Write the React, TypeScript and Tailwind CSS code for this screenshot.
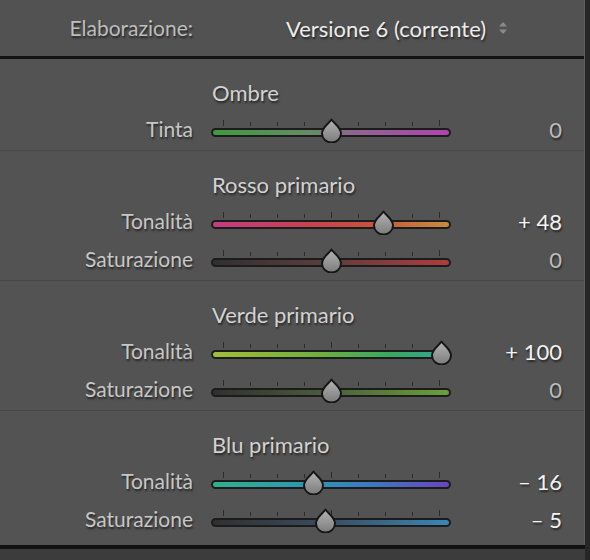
import React from 'react';

type Row = { label: string; value: number; gradient: string };
type Section = { title: string; rows: Row[] };

const sections: Section[] = [
  {
    title: 'Ombre',
    rows: [{ label: 'Tinta', value: 0, gradient: 'linear-gradient(90deg,#3e9a3e 0%,#6a8a6a 45%,#8a6a8a 55%,#b043b0 100%)' }],
  },
  {
    title: 'Rosso primario',
    rows: [
      { label: 'Tonalità', value: 48, gradient: 'linear-gradient(90deg,#c23c82 0%,#c64250 40%,#c8503e 65%,#c88c3e 100%)' },
      { label: 'Saturazione', value: 0, gradient: 'linear-gradient(90deg,#303030 0%,#5a3c3c 45%,#b03c3c 100%)' },
    ],
  },
  {
    title: 'Verde primario',
    rows: [
      { label: 'Tonalità', value: 100, gradient: 'linear-gradient(90deg,#a4bc3a 0%,#6eb040 45%,#3aa860 75%,#2fa898 100%)' },
      { label: 'Saturazione', value: 0, gradient: 'linear-gradient(90deg,#303030 0%,#4a5a3a 45%,#6aa03a 100%)' },
    ],
  },
  {
    title: 'Blu primario',
    rows: [
      { label: 'Tonalità', value: -16, gradient: 'linear-gradient(90deg,#2fb08a 0%,#2f9ab0 35%,#3a7cc0 65%,#6a44c0 100%)' },
      { label: 'Saturazione', value: -5, gradient: 'linear-gradient(90deg,#303030 0%,#3a4a5a 45%,#3a86b8 100%)' },
    ],
  },
];

const ticks = [0, 1, 2, 3, 4, 5, 6, 7, 8];

function Thumb({ left }: { left: number }) {
  return (
    <svg
      className="absolute top-[7px]"
      style={{ left: left - 11.5 }}
      width="23"
      height="25"
      viewBox="0 0 23 25"
    >
      <defs>
        <linearGradient id="thumbFill" x1="0" y1="0" x2="0" y2="1">
          <stop offset="0" stopColor="#b4b4b4" />
          <stop offset="1" stopColor="#7c7c7c" />
        </linearGradient>
      </defs>
      <path
        d="M11.5 1.5 C13.5 5 21 9 21 15.5 A9.5 9 0 0 1 2 15.5 C2 9 9.5 5 11.5 1.5 Z"
        fill="url(#thumbFill)"
        stroke="#161616"
        strokeWidth="2"
        strokeLinejoin="round"
      />
    </svg>
  );
}

function Slider({ value, gradient }: { value: number; gradient: string }) {
  const center = 120 + value * 1.1;
  return (
    <div className="relative h-[38px] w-[240px]">
      {ticks.map((i) => (
        <div
          key={i}
          className={`absolute w-px bg-[#2a2a2a] ${i % 4 === 0 ? 'top-[9px] h-[6px]' : 'top-[11px] h-[4px]'}`}
          style={{ left: 12 + i * 27 }}
        />
      ))}
      <div
        className="absolute left-0 top-[17px] h-[9px] w-[240px] rounded-full border-2 border-[#1c1c1c]"
        style={{ background: gradient }}
      />
      <Thumb left={center} />
    </div>
  );
}

function formatValue(v: number) {
  if (v > 0) return `+ ${v}`;
  if (v < 0) return `– ${Math.abs(v)}`;
  return '0';
}

const shadow = '[text-shadow:1px_2px_2px_rgba(0,0,0,0.55)]';

export default function App() {
  return (
    <div className="flex h-[560px] w-[590px] bg-[#262626] font-['Lato',sans-serif]">
      <div className="flex w-[585px] flex-col bg-[#3c3c3c]">
        <div className="border-r border-[#5e5e5e]">
          {/* En-tête */}
          <div className="flex h-[59px] items-center border-b-[3px] border-[#121212] bg-[#525252]">
            <div className={`w-[193px] text-right text-[21px] text-[#bdbdbd] ${shadow}`}>Elaborazione:</div>
            <div className={`ml-[93px] text-[22px] text-[#ececec] ${shadow}`}>Versione 6 (corrente)</div>
            <svg className="ml-[12px]" width="10" height="14" viewBox="0 0 10 14">
              <path d="M5 1 L9 5.5 L1 5.5 Z" fill="#8a8a8a" />
              <path d="M5 13 L9 8.5 L1 8.5 Z" fill="#8a8a8a" />
            </svg>
          </div>

          {sections.map((s, si) => {
            const last = si === sections.length - 1;
            return (
              <div
                key={s.title}
                className={`bg-[#535353] pt-[15px] ${last ? 'pb-[7px]' : 'pb-[2px] border-b border-[#474747]'}`}
              >
                <div className={`flex h-[36px] items-center pl-[212px] text-[22px] text-[#d2d2d2] ${shadow}`}>{s.title}</div>
                {s.rows.map((r) => (
                  <div key={r.label} className="flex h-[38px] items-center">
                    <div className={`w-[193px] text-right text-[21px] text-[#c6c6c6] ${shadow}`}>{r.label}</div>
                    <div className="ml-[18px] pt-[2px]">
                      <Slider value={r.value} gradient={r.gradient} />
                    </div>
                    <div
                      className={`w-[111px] text-right text-[22px] ${r.value === 0 ? 'text-[#bcbcbc]' : 'text-[#f2f2f2]'} ${shadow}`}
                    >
                      {formatValue(r.value)}
                    </div>
                  </div>
                ))}
              </div>
            );
          })}
        </div>
        <div className="h-[4px] bg-[#121212]" />
      </div>
    </div>
  );
}
